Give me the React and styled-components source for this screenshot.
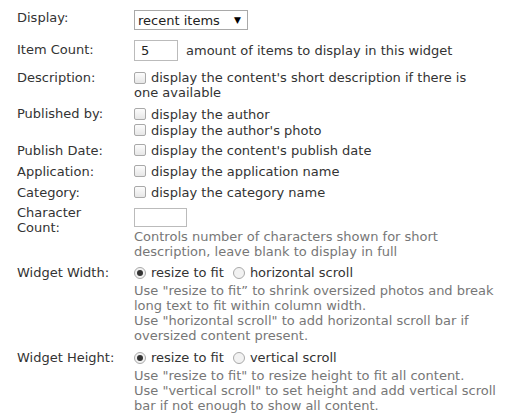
import React from "react";
import styled, { createGlobalStyle } from "styled-components";

const GlobalStyle = createGlobalStyle`
  body {
    margin: 0;
    background: #fff;
    font-family: "DejaVu Sans", Verdana, sans-serif;
    font-size: 13px;
    color: #333;
  }
`;

const Form = styled.div`
  display: grid;
  grid-template-columns: 117px 372px;
  padding: 10px 0 0 17px;
`;

const Label = styled.div`
  padding-top: ${(p) => p.top || 0}px;
  padding-bottom: ${(p) => p.bottom || 0}px;
  line-height: 15px;
  width: 108px;
`;

const Field = styled.div`
  padding-bottom: ${(p) => p.bottom || 0}px;
  line-height: 15px;
`;

const Line = styled.div`
  display: flex;
  align-items: center;
  gap: ${(p) => p.gap || 5}px;
  height: ${(p) => p.h || 15}px;
`;

const Select = styled.div`
  display: inline-flex;
  align-items: center;
  justify-content: space-between;
  box-sizing: border-box;
  width: 114px;
  height: 20px;
  border: 1px solid #a9a9a9;
  padding: 0 6px 0 3px;
  color: #222;
`;

const Caret = styled.span`
  font-size: 9px;
  color: #000;
`;

const TextBox = styled.div`
  box-sizing: border-box;
  width: ${(p) => p.w}px;
  height: ${(p) => p.h}px;
  margin-top: ${(p) => p.top || 0}px;
  border: 1px solid #bbb;
  padding: 0 6px;
  display: flex;
  align-items: center;
  color: #222;
  flex: none;
`;

const Box = styled.span`
  box-sizing: border-box;
  width: 12px;
  height: 12px;
  border: 1px solid #a9a9a9;
  border-radius: 2px;
  background: linear-gradient(#fcfcfc, #e6e6e6);
  flex: none;
`;

const Radio = styled.span`
  box-sizing: border-box;
  width: 12px;
  height: 12px;
  margin-left: ${(p) => (p.spaced ? 4 : 0)}px;
  border: 1px solid #a9a9a9;
  border-radius: 50%;
  background: #f2f2f2;
  flex: none;
  display: flex;
  align-items: center;
  justify-content: center;
  &::after {
    content: "";
    width: 6px;
    height: 6px;
    border-radius: 50%;
    background: ${(p) => (p.checked ? "#333" : "transparent")};
  }
`;

const Check = ({ children }) => (
  <Line h={16}>
    <Box />
    <span>{children}</span>
  </Line>
);

const Hint = styled.div`
  color: #777;
  line-height: 15px;
  margin-top: ${(p) => p.top || 0}px;
`;

export default function App() {
  return (
    <>
      <GlobalStyle />
      <Form>
        <Label bottom={14}>Display:</Label>
        <Field bottom={10}>
          <Select>
            <span>recent items</span>
            <Caret>▼</Caret>
          </Select>
        </Field>

        <Label top={2} bottom={8}>Item Count:</Label>
        <Field bottom={9}>
          <Line gap={8} h={21}>
            <TextBox w={44} h={21}>5</TextBox>
            <span>amount of items to display in this widget</span>
          </Line>
        </Field>

        <Label bottom={6}>Description:</Label>
        <Field bottom={6}>
          <Line>
            <Box />
            <span>display the content's short description if there is</span>
          </Line>
          <div>one available</div>
        </Field>

        <Label>Published by:</Label>
        <Field bottom={4}>
          <Check>display the author</Check>
          <Check>display the author's photo</Check>
        </Field>

        <Label top={1}>Publish Date:</Label>
        <Field bottom={5}>
          <Check>display the content's publish date</Check>
        </Field>

        <Label top={1}>Application:</Label>
        <Field bottom={5}>
          <Check>display the application name</Check>
        </Field>

        <Label top={1}>Category:</Label>
        <Field bottom={5}>
          <Check>display the category name</Check>
        </Field>

        <Label>Character Count:</Label>
        <Field bottom={3}>
          <TextBox w={53} h={19} top={3} />
          <Hint top={2}>
            Controls number of characters shown for short
            <br />
            description, leave blank to display in full
          </Hint>
        </Field>

        <Label top={3}>Widget Width:</Label>
        <Field bottom={4}>
          <Line h={21}>
            <Radio checked />
            <span>resize to fit</span>
            <Radio spaced />
            <span>horizontal scroll</span>
          </Line>
          <Hint>
            Use "resize to fit” to shrink oversized photos and break long text to fit within column width.
            <br />
            Use "horizontal scroll" to add horizontal scroll bar if oversized content present.
          </Hint>
        </Field>

        <Label top={3}>Widget Height:</Label>
        <Field>
          <Line h={21}>
            <Radio checked />
            <span>resize to fit</span>
            <Radio spaced />
            <span>vertical scroll</span>
          </Line>
          <Hint>
            Use "resize to fit" to resize height to fit all content.
            <br />
            Use "vertical scroll" to set height and add vertical scroll bar if not enough to show all content.
          </Hint>
        </Field>
      </Form>
    </>
  );
}
